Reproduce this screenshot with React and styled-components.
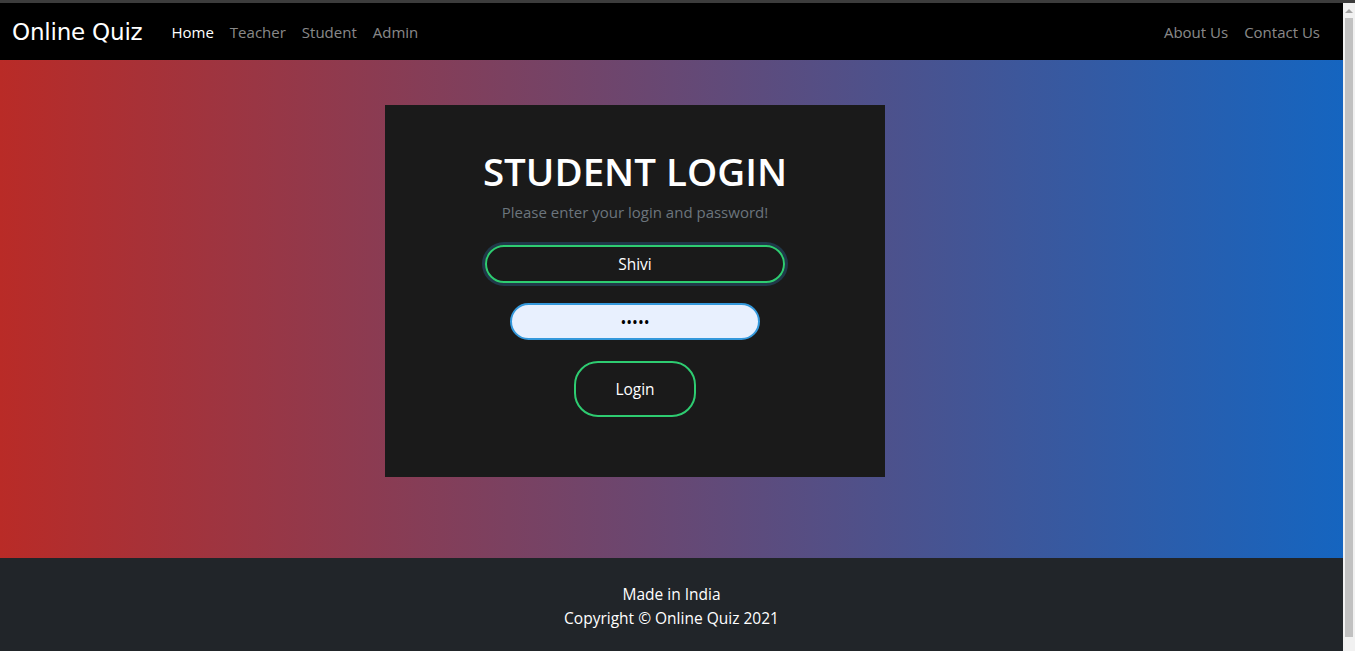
import React from 'react';
import styled, { createGlobalStyle } from 'styled-components';

const GlobalStyle = createGlobalStyle`
  html, body {
    margin: 0;
    padding: 0;
    height: 100%;
    overflow: hidden;
  }
  body {
    font-family: "Open Sans", "Noto Sans", sans-serif;
  }
`;

const Root = styled.div`
  width: 1355px;
  height: 651px;
  display: flex;
  flex-direction: column;
`;

const TopStrip = styled.div`
  height: 3px;
  background: #3c3c3c;
`;

const Body = styled.div`
  flex: 1;
  display: flex;
`;

const Main = styled.div`
  flex: 1;
  display: flex;
  flex-direction: column;
`;

// fake browser scrollbar, it is in the picture
const ScrollBar = styled.div`
  width: 12px;
  background: #f1f1f1;
  display: flex;
  flex-direction: column;
  align-items: center;
`;

const ScrollArrow = styled.div`
  width: 0;
  height: 0;
  margin: 6px 0 5px;
  border-left: 4px solid transparent;
  border-right: 4px solid transparent;
  border-bottom: 4px solid #a3a3a3;
`;

const ScrollThumb = styled.div`
  width: 8px;
  flex: 1;
  margin-bottom: 14px;
  background: #c1c1c1;
`;

const Nav = styled.nav`
  height: 57px;
  background: #000;
  display: flex;
  align-items: center;
  padding: 0 23px 0 12px;
`;

const Brand = styled.div`
  font-family: "DejaVu Sans", sans-serif;
  font-size: 23px;
  color: #fff;
  margin-right: 29px;
  letter-spacing: -0.2px;
`;

const NavList = styled.div`
  display: flex;
  gap: 16px;
  margin-left: ${(p) => (p.right ? 'auto' : '0')};
`;

const NavLink = styled.a`
  font-size: 15px;
  color: ${(p) => (p.active ? '#fff' : 'rgba(255,255,255,0.55)')};
  text-decoration: none;
`;

const Hero = styled.section`
  height: 498px;
  background: linear-gradient(to right, #b92b27, #1565c0);
  padding: 45px 0 0 385px;
  box-sizing: border-box;
`;

const Card = styled.div`
  width: 500px;
  height: 372px;
  background: #1a1a1a;
  display: flex;
  flex-direction: column;
  align-items: center;
  padding-top: 43px;
  box-sizing: border-box;
`;

const Title = styled.h1`
  margin: 0;
  font-size: 38.5px;
  font-weight: 600;
  color: #fff;
  line-height: 46px;
`;

const Subtitle = styled.p`
  margin: 8px 0 23px;
  font-size: 15px;
  color: #6c757d;
`;

const Input = styled.input`
  box-sizing: border-box;
  width: ${(p) => p.w}px;
  height: ${(p) => (p.focus ? 38 : 37)}px;
  border-radius: 24px;
  border: 2px solid ${(p) => (p.focus ? '#2ecc71' : '#3498db')};
  background: ${(p) => (p.focus ? 'transparent' : '#e8f0fe')};
  color: ${(p) => (p.focus ? '#fff' : '#000')};
  box-shadow: ${(p) => (p.focus ? '0 0 0 3px rgba(52,152,219,0.25)' : 'none')};
  text-align: center;
  font-family: "Open Sans", sans-serif;
  font-size: 15.5px;
  outline: none;
  margin-bottom: ${(p) => (p.focus ? 20 : 21)}px;
`;

const Button = styled.button`
  box-sizing: border-box;
  width: 122px;
  height: 56px;
  border-radius: 24px;
  border: 2px solid #2ecc71;
  background: transparent;
  color: #fff;
  font-family: "Open Sans", sans-serif;
  font-size: 15.5px;
  cursor: pointer;
`;

const Footer = styled.footer`
  flex: 1;
  background: #212529;
  color: #fff;
  display: flex;
  flex-direction: column;
  align-items: center;
  padding-top: 24px;
  box-sizing: border-box;
  font-size: 15.5px;
  line-height: 24px;
`;

const App = () => {
  return (
    <Root>
      <GlobalStyle />
      <TopStrip />
      <Body>
        <Main>
          <Nav>
            <Brand>Online Quiz</Brand>
            <NavList>
              <NavLink active href="#">Home</NavLink>
              <NavLink href="#">Teacher</NavLink>
              <NavLink href="#">Student</NavLink>
              <NavLink href="#">Admin</NavLink>
            </NavList>
            <NavList right>
              <NavLink href="#">About Us</NavLink>
              <NavLink href="#">Contact Us</NavLink>
            </NavList>
          </Nav>
          <Hero>
            <Card>
              <Title>STUDENT LOGIN</Title>
              <Subtitle>Please enter your login and password!</Subtitle>
              <Input focus w={300} type="text" defaultValue="Shivi" />
              <Input w={250} type="password" defaultValue="shivi" />
              <Button>Login</Button>
            </Card>
          </Hero>
          <Footer>
            <div>Made in India</div>
            <div>Copyright © Online Quiz 2021</div>
          </Footer>
        </Main>
        <ScrollBar>
          <ScrollArrow />
          <ScrollThumb />
        </ScrollBar>
      </Body>
    </Root>
  );
};

export default App;
